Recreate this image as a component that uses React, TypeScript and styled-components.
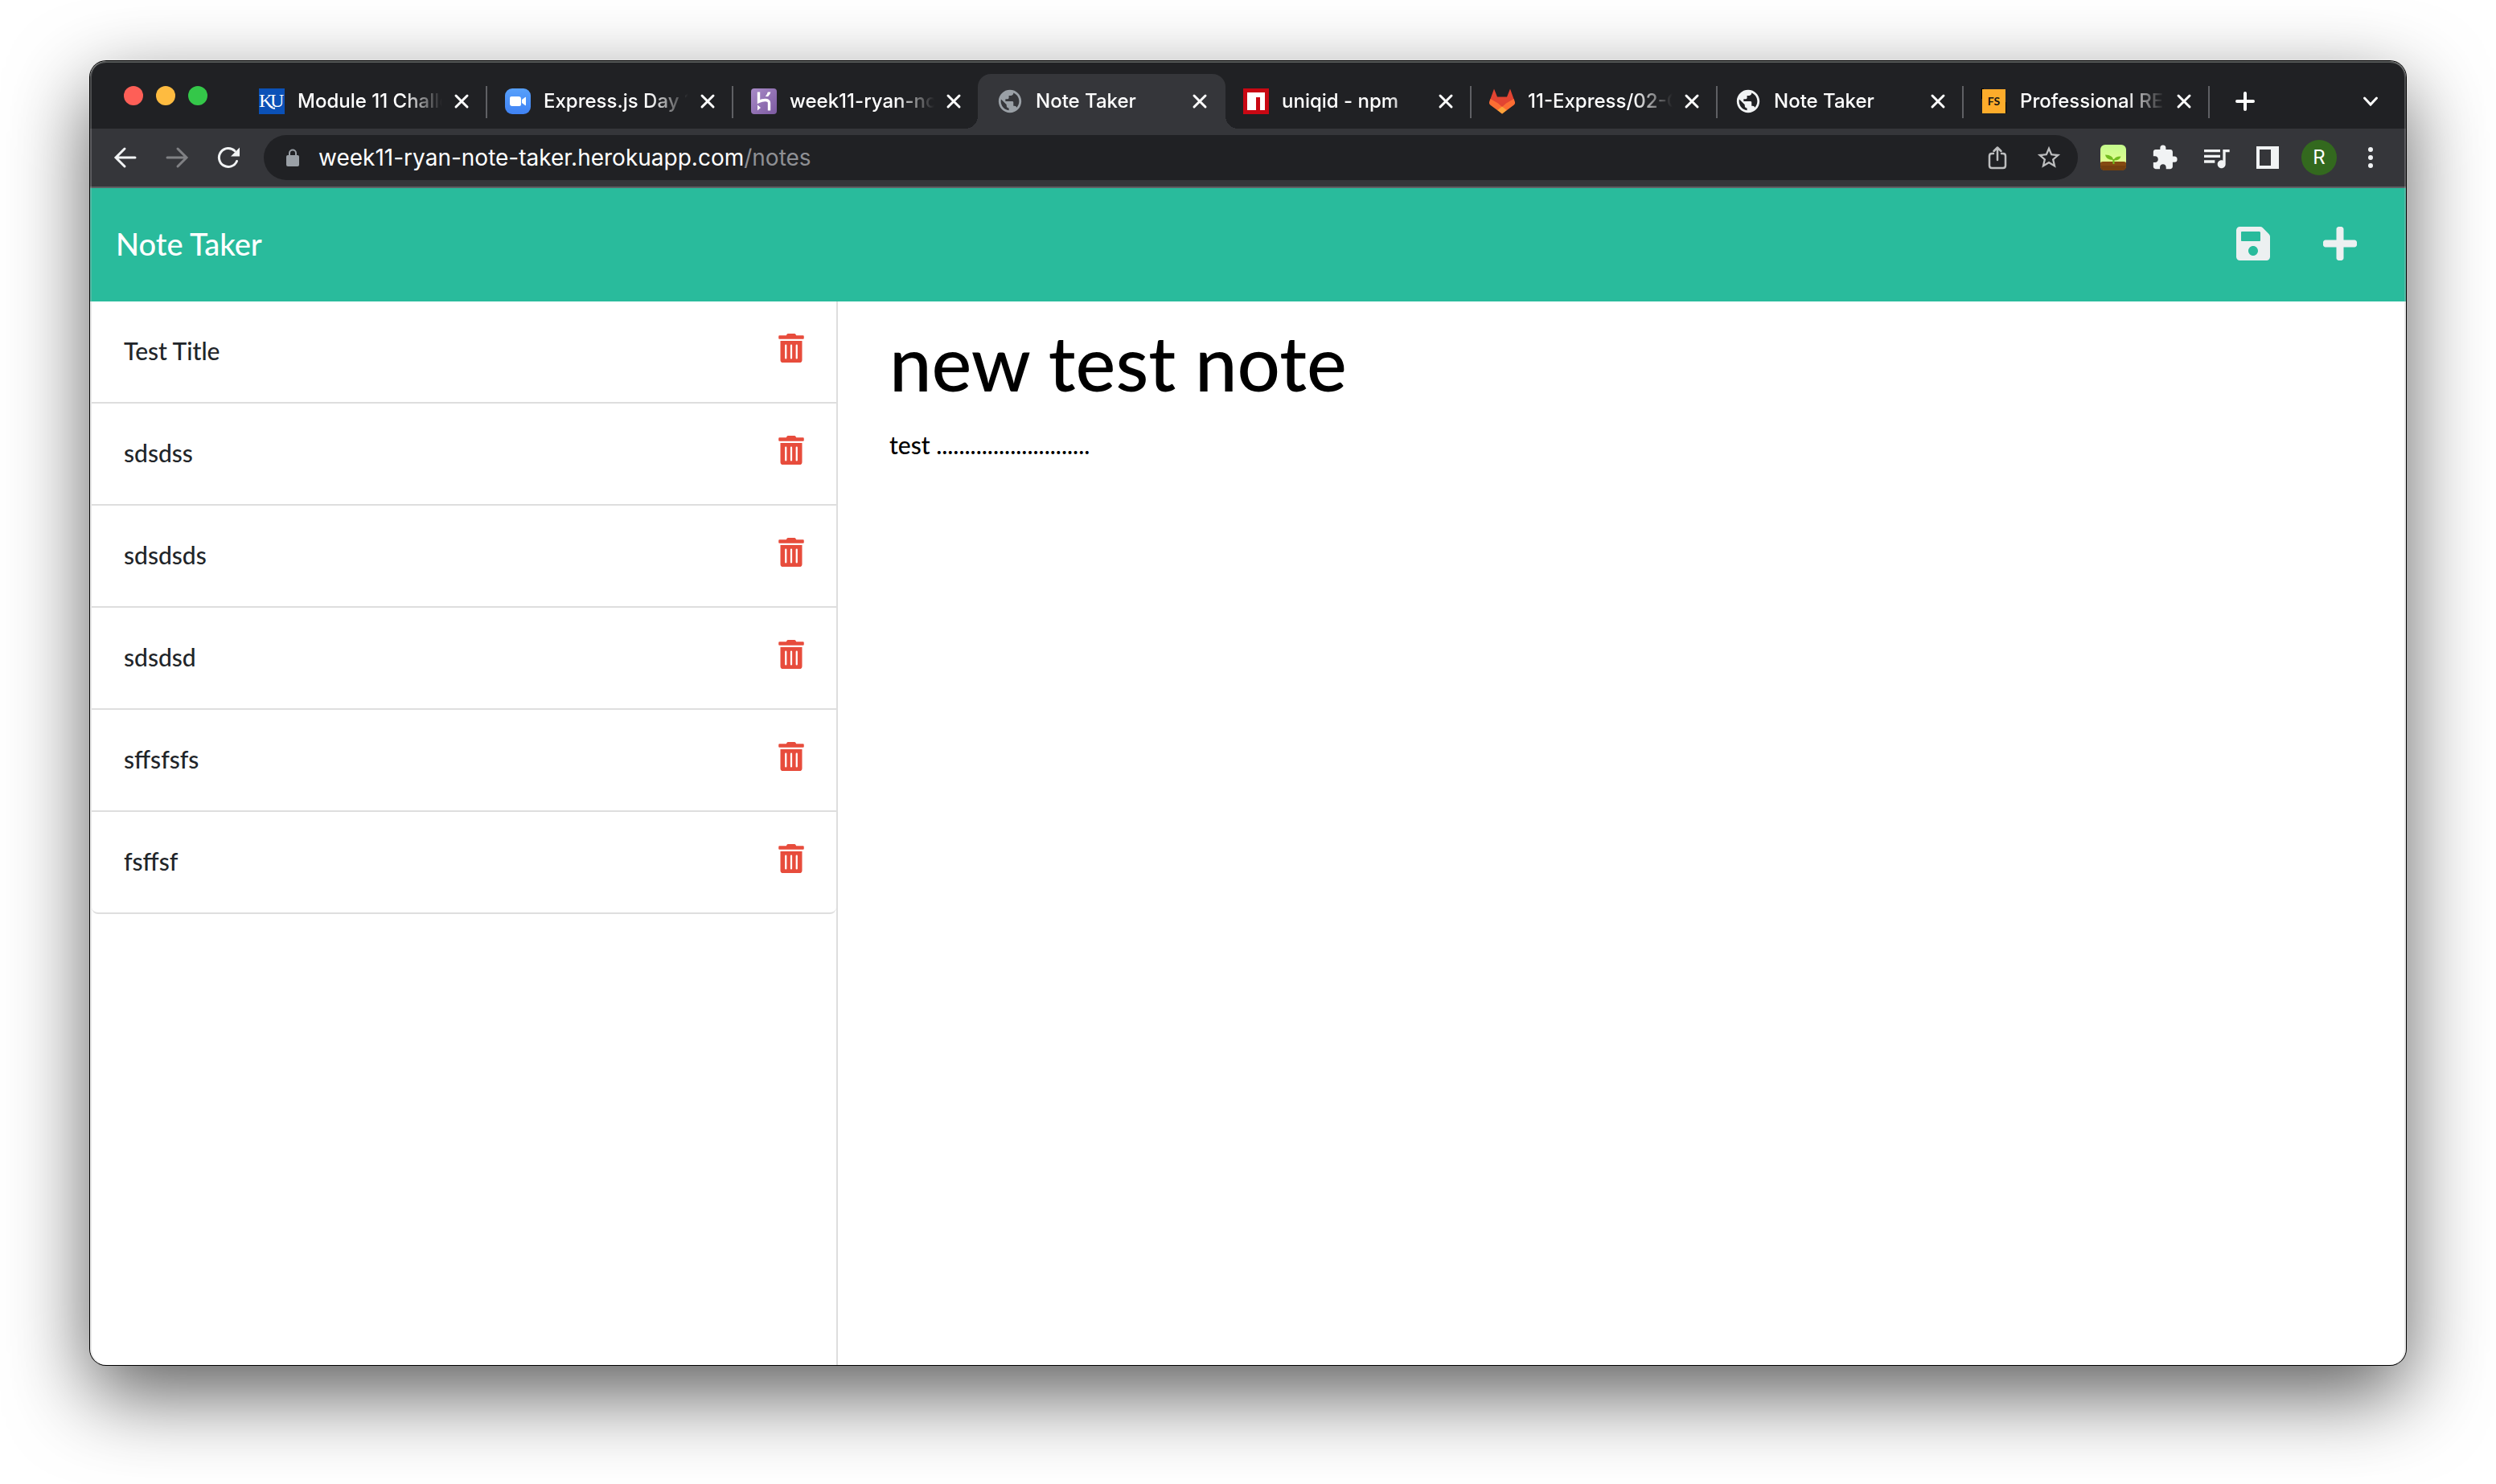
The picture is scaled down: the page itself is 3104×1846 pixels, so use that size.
import React, { useState } from "react";
import styled, { createGlobalStyle } from "styled-components";
import { FaPlus, FaSave, FaTrashAlt } from "react-icons/fa";
import { MdExtension, MdPublic, MdQueueMusic, MdStarBorder } from "react-icons/md";

const GlobalStyle = createGlobalStyle`
  *, *::before, *::after { box-sizing: border-box; }
  body { margin: 0; background: #ffffff; }
  button, input, textarea { font: inherit; color: inherit; border: 0; padding: 0; margin: 0; background: none; outline: 0; }
  h1, ul { margin: 0; padding: 0; font: inherit; list-style: none; }
  svg { display: block; flex: none; }
`;

const chromeFont = `Inter, Roboto, "Liberation Sans", sans-serif`;
const pageFont = `Lato, "Open Sans", "Liberation Sans", sans-serif`;

const Desktop = styled.div`
  min-height: 100vh;
  padding: 76px 112px 148px;
  display: flex;
`;

const BrowserWindow = styled.div`
  position: relative;
  flex: 1;
  min-width: 0;
  display: flex;
  flex-direction: column;
  border-radius: 20px;
  overflow: hidden;
  background: #ffffff;
  box-shadow: 0 0 0 1px #000000, 0 36px 100px rgba(0, 0, 0, 0.64);

  &::after {
    content: "";
    position: absolute;
    inset: 0;
    border-radius: inherit;
    pointer-events: none;
    box-shadow: inset 0 2px 0 rgba(190, 195, 190, 0.35), inset 2px 0 0 rgba(190, 190, 190, 0.3),
      inset -2px 0 0 rgba(190, 190, 190, 0.3);
  }
`;

const TabStrip = styled.div`
  display: flex;
  align-items: stretch;
  height: 84px;
  padding: 0 16px 0 42px;
  background: #202124;
  color: #ffffff;
`;

const TrafficLights = styled.div`
  display: flex;
  align-items: center;
  gap: 16px;
  margin: 2px 40px 0 0;
`;

const Light = styled.button<{ $color: string }>`
  width: 24px;
  height: 24px;
  border-radius: 50%;
  background: ${(p) => p.$color};
`;

const Tabs = styled.ul`
  display: flex;
  margin-top: 16px;
`;

const Divider = styled.span`
  position: absolute;
  left: 0;
  top: 15px;
  width: 2px;
  height: 40px;
  background: #5f6064;
`;

const TabItem = styled.li<{ $active?: boolean }>`
  position: relative;
  display: flex;
  align-items: center;
  width: 306px;
  padding: 0 14px 0 24px;
  font: 500 24px/32px ${chromeFont};

  ${(p) =>
    p.$active &&
    `
    &::before {
      content: "";
      position: absolute;
      inset: 0 -2px 0 0;
      border-radius: 16px 16px 0 0;
      background: #35363a;
    }
    &::after {
      content: "";
      position: absolute;
      inset: auto -18px 0 -16px;
      height: 16px;
      background:
        radial-gradient(circle at 0 0, transparent 16px, #35363a 16px) left / 16px 16px no-repeat,
        radial-gradient(circle at 100% 0, transparent 16px, #35363a 16px) right / 16px 16px no-repeat;
    }
    & > * { z-index: 1; }
  `}
`;

const Favicon = styled.span`
  position: relative;
  display: flex;
  align-items: center;
  justify-content: center;
  width: 32px;
  height: 32px;
  margin-right: 16px;
`;

const TabTitle = styled.span`
  position: relative;
  flex: 1;
  min-width: 0;
  margin-right: 8px;
  overflow: hidden;
  white-space: nowrap;
  mask-image: linear-gradient(to right, #000 calc(100% - 48px), transparent);
`;

const IconButton = styled.button<{ $size?: number; $color?: string }>`
  position: relative;
  display: flex;
  align-items: center;
  justify-content: center;
  flex: none;
  width: ${(p) => p.$size ?? 56}px;
  height: ${(p) => p.$size ?? 56}px;
  color: ${(p) => p.$color ?? "#f1f3f4"};
  cursor: pointer;
`;

const NewTab = styled.div`
  position: relative;
  display: flex;
  align-items: center;
  margin: 16px auto 0 0;
  padding-left: 18px;
`;

const TabSearch = styled.div`
  display: flex;
  align-items: center;
  margin-top: 16px;
`;

const Toolbar = styled.div`
  display: flex;
  align-items: center;
  gap: 8px;
  height: 74px;
  padding: 0 16px;
  background: #35363a;
  border-bottom: 2px solid #5f6064;
`;

const Omnibox = styled.div`
  display: flex;
  align-items: center;
  flex: 1;
  height: 56px;
  margin: 0 8px;
  padding: 0 8px 0 28px;
  border-radius: 28px;
  background: #202124;
  color: #ffffff;
  font: 400 28px/36px ${chromeFont};
`;

const Address = styled.span`
  flex: 1;
  margin-left: 24px;
  white-space: nowrap;
`;

const Path = styled.span`
  color: #8f9094;
`;

const OmniActions = styled.div`
  display: flex;
  gap: 8px;
`;

const Avatar = styled.span`
  display: flex;
  align-items: center;
  justify-content: center;
  width: 44px;
  height: 44px;
  border-radius: 50%;
  background: #33691e;
  color: #ffffff;
  font: 400 24px/32px ${chromeFont};
`;

const Navbar = styled.header`
  display: flex;
  align-items: center;
  justify-content: space-between;
  height: 141px;
  padding: 0 58px 4px 32px;
  background: #29bb9c;
  color: #ffffff;
`;

const Brand = styled.a`
  color: inherit;
  text-decoration: none;
  font: 500 38px/48px ${pageFont};
`;

const NavActions = styled.div`
  display: flex;
  gap: 60px;
`;

const Content = styled.main`
  display: grid;
  grid-template-columns: 31fr 65fr;
  flex: 1;
  font-family: ${pageFont};
`;

const Sidebar = styled.aside`
  padding-left: 2px;
  border-right: 2px solid #dedede;
`;

const NoteItem = styled.li`
  display: flex;
  align-items: center;
  justify-content: space-between;
  height: 127px;
  padding: 0 40px 4px;
  border-bottom: 2px solid #dedede;
  color: #212529;

  &:last-child {
    border-radius: 0 0 8px 8px;
  }
`;

const NoteTitle = styled.button`
  flex: 1;
  text-align: left;
  font-size: 30px;
  font-weight: 500;
  line-height: 48px;
  cursor: pointer;
`;

const DeleteButton = styled(IconButton)`
  align-items: flex-start;
  width: 32px;
  height: 42px;
`;

const Editor = styled.section`
  display: flex;
  flex-direction: column;
  padding: 18px 64px;
  color: #000000;
  font-weight: 500;
`;

const TitleInput = styled.input`
  width: 100%;
  height: 116px;
  font-size: 94px;
  line-height: 116px;
`;

const BodyInput = styled.textarea`
  flex: 1;
  width: 100%;
  margin-top: 20px;
  resize: none;
  font-size: 30px;
  line-height: 48px;
`;

const CloseIcon = () => (
  <svg width="20" height="20" viewBox="0 0 20 20" stroke="#ffffff" strokeWidth="3" strokeLinecap="round">
    <path d="M3 3l14 14M17 3L3 17" />
  </svg>
);

const KuIcon = () => (
  <svg width="32" height="32" viewBox="0 0 32 32">
    <rect width="32" height="32" fill="#0b51b7" />
    <g fill="#ffffff" fontSize="24" fontFamily="Liberation Serif, serif">
      <text x="0" y="23">K</text>
      <text x="14" y="23">U</text>
    </g>
    <path d="M12 20q4 5.500 8 4.500" fill="none" stroke="#ffffff" strokeWidth="2" />
  </svg>
);

const ZoomIcon = () => (
  <svg width="32" height="32" viewBox="0 0 32 32">
    <defs>
      <linearGradient id="zoomBlue" x1="0" y1="0" x2="0" y2="1">
        <stop offset="0" stopColor="#57a0fb" />
        <stop offset="1" stopColor="#3f82f4" />
      </linearGradient>
    </defs>
    <rect width="32" height="32" rx="9" fill="url(#zoomBlue)" />
    <path d="M6 12q0-2 2-2h9q3 0 3 3v7q0 2-2 2H9q-3 0-3-3zM21 14l4-3q1-.6 1 .6v8.800q0 1.200-1 .6l-4-3z" fill="#ffffff" />
  </svg>
);

const HerokuIcon = () => (
  <svg width="32" height="32" viewBox="0 0 32 32">
    <defs>
      <linearGradient id="herokuPurple" x1="0" y1="0" x2="1" y2="1">
        <stop offset="0" stopColor="#a98bc8" />
        <stop offset="1" stopColor="#7c5aa0" />
      </linearGradient>
    </defs>
    <rect width="32" height="32" rx="4" fill="url(#herokuPurple)" />
    <path d="M9.500 4.500v12c4-1.800 13-4 13 1.500v9.500" fill="none" stroke="#ffffff" strokeWidth="3.400" />
    <path d="M8 20.500l4 3.500-4 3.500zM20.800 4.500h3.600q-.5 3-3.200 5.500h-3.400q2.400-2.500 3-5.500z" fill="#ffffff" />
  </svg>
);

const NpmIcon = () => (
  <svg width="32" height="32" viewBox="0 0 32 32">
    <rect width="32" height="32" fill="#c90813" />
    <path d="M5 5h22v22h-6V11h-5v16H5z" fill="#ffffff" />
  </svg>
);

const GitlabIcon = () => (
  <svg width="32" height="32" viewBox="0 0 32 32">
    <path d="M6 .5L.6 15.500 16 31.500l15.400-16L26 .5l-4 10H10z" fill="#e24432" />
    <path d="M1.500 13L0 17q-.4 2 1.200 3.400L16 31.500l14.800-11.100q1.600-1.400 1.200-3.400l-1.500-4-9.500 5.600-5 4.400-5-4.400z" fill="#fc6d33" />
    <path d="M16 22.500l-5.700 4.600L16 31.500l5.700-4.400z" fill="#fca33a" />
  </svg>
);

const FsIcon = () => (
  <svg width="32" height="32" viewBox="0 0 32 32">
    <path d="M3 1H1v11h2M28 18h2v12h-2" fill="none" stroke="#000000" strokeWidth="2" />
    <rect x="1" y="1" width="29" height="30" fill="#fdac2b" />
    <text x="15.500" y="21" fontSize="14" fontWeight="700" textAnchor="middle" fontFamily="Lato, sans-serif" fill="#141414">
      FS
    </text>
  </svg>
);

const BackIcon = () => (
  <svg width="32" height="32" viewBox="0 0 32 32" fill="none" stroke="currentColor" strokeWidth="3" strokeLinecap="round">
    <path d="M28 16H5M15 5L4 16l11 11" />
  </svg>
);

const ForwardIcon = () => (
  <svg width="32" height="32" viewBox="0 0 32 32" fill="none" stroke="currentColor" strokeWidth="3" strokeLinecap="round">
    <path d="M4 16h23M17 5l11 11-11 11" />
  </svg>
);

const ReloadIcon = () => (
  <svg width="32" height="32" viewBox="0 0 32 32">
    <path d="M26.500 20.500A11.500 11.500 0 1 1 24 7.800" fill="none" stroke="currentColor" strokeWidth="3" strokeLinecap="round" />
    <path d="M30 3.500v11H19z" fill="currentColor" />
  </svg>
);

const LockIcon = () => (
  <svg width="16" height="22" viewBox="0 0 16 22">
    <rect y="8" width="16" height="14" rx="2" fill="#9aa0a6" />
    <path d="M4 9V5.500a4 4 0 0 1 8 0V9" fill="none" stroke="#9aa0a6" strokeWidth="2" />
  </svg>
);

const ShareIcon = () => (
  <svg width="24" height="30" viewBox="0 0 24 30" fill="none" stroke="currentColor" strokeWidth="2.500" strokeLinecap="round" strokeLinejoin="round">
    <path d="M7 10H5q-3 0-3 3v12q0 3 3 3h14q3 0 3-3V13q0-3-3-3h-2M12 18V2.500M7.500 7L12 2.500 16.500 7" />
  </svg>
);

const PlantIcon = () => (
  <svg width="32" height="32" viewBox="0 0 32 32">
    <defs>
      <linearGradient id="plantSky" x1="0" y1="0" x2="0" y2="1">
        <stop offset="0" stopColor="#c4fb8c" />
        <stop offset="1" stopColor="#eeff93" />
      </linearGradient>
    </defs>
    <rect width="32" height="32" rx="6" fill="url(#plantSky)" />
    <path d="M0 23q0-2 3-2h26q3 0 3 2v3q0 6-6 6H6q-6 0-6-6z" fill="#844a12" />
    <path d="M0 26h32q0 6-6 6H6q-6 0-6-6z" fill="#74400f" />
    <path d="M16 24v-5q0-6-10-6.500 1 6.500 9.500 6.500M16.500 19.500q1-5 9-5-1.500 5.500-9 5" fill="#72bd1f" />
    <path d="M16.500 18v6" stroke="#72bd1f" strokeWidth="2" />
  </svg>
);

const SidePanelIcon = () => (
  <svg width="28" height="28" viewBox="0 0 28 28">
    <path fillRule="evenodd" d="M0 0h28v28H0zM4 4v20h14V4z" fill="currentColor" />
  </svg>
);

const DotsIcon = () => (
  <svg width="8" height="28" viewBox="0 0 8 28" fill="currentColor">
    <circle cx="4" cy="4" r="3" />
    <circle cx="4" cy="14" r="3" />
    <circle cx="4" cy="24" r="3" />
  </svg>
);

const PlusIcon = () => (
  <svg width="24" height="24" viewBox="0 0 24 24" stroke="#ffffff" strokeWidth="4" strokeLinecap="round">
    <path d="M2 12h20M12 2v20" />
  </svg>
);

const ChevronIcon = () => (
  <svg width="20" height="14" viewBox="0 0 20 14" fill="none" stroke="#ffffff" strokeWidth="3" strokeLinecap="round">
    <path d="M2.500 3L10 11l7.500-8" />
  </svg>
);

const tabs = [
  { title: "Module 11 Challenge", icon: <KuIcon /> },
  { title: "Express.js Day 1", icon: <ZoomIcon /> },
  { title: "week11-ryan-note", icon: <HerokuIcon /> },
  { title: "Note Taker", icon: <MdPublic size={34} color="#9aa0a6" />, active: true },
  { title: "uniqid - npm", icon: <NpmIcon />, first: true },
  { title: "11-Express/02-Ch", icon: <GitlabIcon /> },
  { title: "Note Taker", icon: <MdPublic size={34} color="#f1f3f4" /> },
  { title: "Professional READ", icon: <FsIcon /> },
];

const notes = ["Test Title", "sdsdss", "sdsdsds", "sdsdsd", "sffsfsfs", "fsffsf"];

export default function App() {
  const [title, setTitle] = useState("new test note");
  const [text, setText] = useState("test ...........................");

  return (
    <>
      <GlobalStyle />
      <Desktop>
        <BrowserWindow>
          <TabStrip>
            <TrafficLights>
              <Light $color="#fe5f57" aria-label="Close window" />
              <Light $color="#febb40" aria-label="Minimize window" />
              <Light $color="#34c749" aria-label="Zoom window" />
            </TrafficLights>
            <Tabs>
              {tabs.map((tab, i) => (
                <TabItem key={i} $active={tab.active}>
                  {i > 0 && !tab.active && !tab.first && <Divider />}
                  <Favicon>{tab.icon}</Favicon>
                  <TabTitle>{tab.title}</TabTitle>
                  <IconButton $size={32} aria-label="Close tab">
                    <CloseIcon />
                  </IconButton>
                </TabItem>
              ))}
            </Tabs>
            <NewTab>
              <Divider />
              <IconButton aria-label="New tab">
                <PlusIcon />
              </IconButton>
            </NewTab>
            <TabSearch>
              <IconButton aria-label="Search tabs">
                <ChevronIcon />
              </IconButton>
            </TabSearch>
          </TabStrip>
          <Toolbar>
            <IconButton aria-label="Back">
              <BackIcon />
            </IconButton>
            <IconButton aria-label="Forward" $color="#808184">
              <ForwardIcon />
            </IconButton>
            <IconButton aria-label="Reload">
              <ReloadIcon />
            </IconButton>
            <Omnibox>
              <LockIcon />
              <Address>
                week11-ryan-note-taker.herokuapp.com<Path>/notes</Path>
              </Address>
              <OmniActions>
                <IconButton aria-label="Share" $color="#bdbebf">
                  <ShareIcon />
                </IconButton>
                <IconButton aria-label="Bookmark" $color="#bdbebf">
                  <MdStarBorder size={34} />
                </IconButton>
              </OmniActions>
            </Omnibox>
            <IconButton aria-label="Plant extension">
              <PlantIcon />
            </IconButton>
            <IconButton aria-label="Extensions">
              <MdExtension size={34} />
            </IconButton>
            <IconButton aria-label="Media">
              <MdQueueMusic size={40} />
            </IconButton>
            <IconButton aria-label="Side panel">
              <SidePanelIcon />
            </IconButton>
            <IconButton aria-label="Profile">
              <Avatar>R</Avatar>
            </IconButton>
            <IconButton aria-label="Menu">
              <DotsIcon />
            </IconButton>
          </Toolbar>
          <Navbar>
            <Brand href="/">Note Taker</Brand>
            <NavActions>
              <IconButton $size={48} $color="#ecf0f1" aria-label="Save note">
                <FaSave size={48} />
              </IconButton>
              <IconButton $size={48} $color="#ecf0f1" aria-label="New note">
                <FaPlus size={48} />
              </IconButton>
            </NavActions>
          </Navbar>
          <Content>
            <Sidebar>
              <ul>
                {notes.map((note) => (
                  <NoteItem key={note}>
                    <NoteTitle>{note}</NoteTitle>
                    <DeleteButton $color="#e74c3c" aria-label={`Delete ${note}`}>
                      <FaTrashAlt size={36} />
                    </DeleteButton>
                  </NoteItem>
                ))}
              </ul>
            </Sidebar>
            <Editor>
              <TitleInput aria-label="Note title" value={title} onChange={(e) => setTitle(e.target.value)} />
              <BodyInput aria-label="Note text" value={text} onChange={(e) => setText(e.target.value)} />
            </Editor>
          </Content>
        </BrowserWindow>
      </Desktop>
    </>
  );
}
